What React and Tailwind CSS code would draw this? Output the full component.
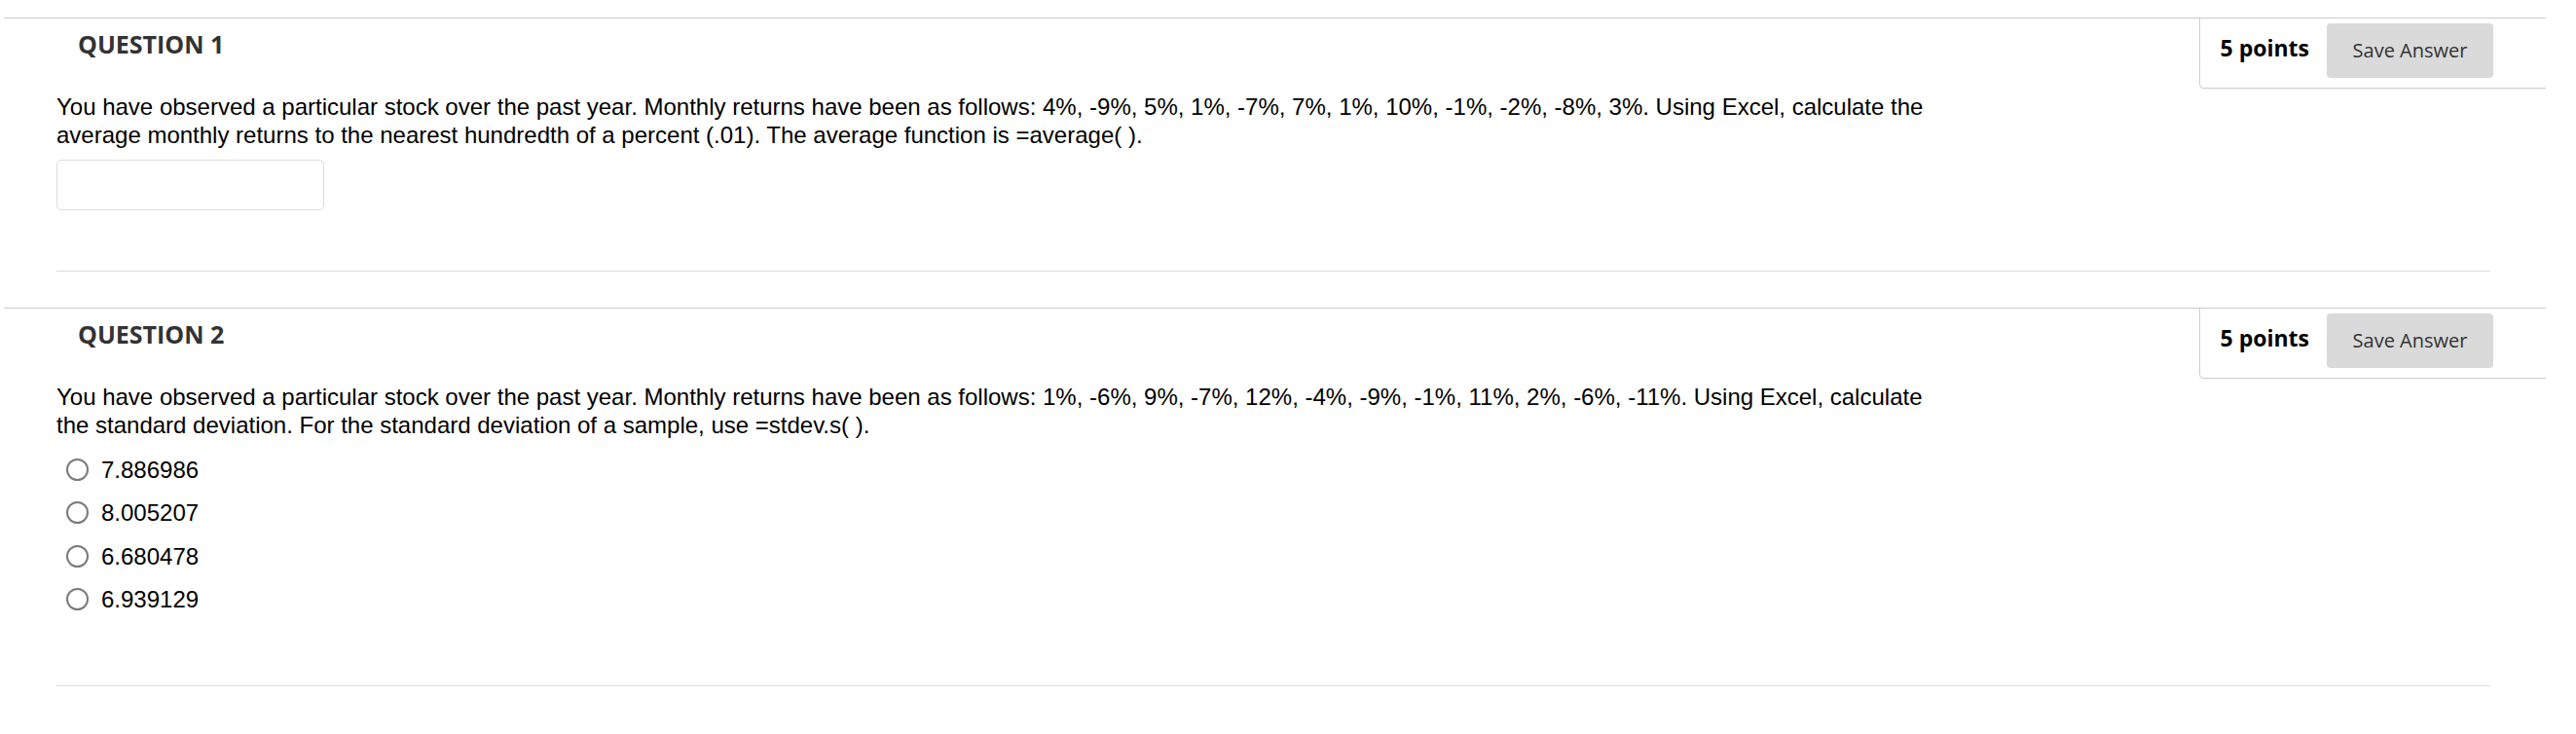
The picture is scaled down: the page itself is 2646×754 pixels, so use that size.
import React from "react";

const questions = [
  {
    id: 1,
    points: 5,
    text: "You have observed a particular stock over the past year. Monthly returns have been as follows: 4%, -9%, 5%, 1%, -7%, 7%, 1%, 10%, -1%, -2%, -8%, 3%. Using Excel, calculate the average monthly returns to the nearest hundredth of a percent (.01). The average function is =average( ).",
    type: "fill",
  },
  {
    id: 2,
    points: 5,
    text: "You have observed a particular stock over the past year. Monthly returns have been as follows: 1%, -6%, 9%, -7%, 12%, -4%, -9%, -1%, 11%, 2%, -6%, -11%. Using Excel, calculate the standard deviation. For the standard deviation of a sample, use =stdev.s( ).",
    type: "choice",
    options: ["7.886986", "8.005207", "6.680478", "6.939129"],
  },
];

function PointsBox({ points }) {
  return (
    <div className="flex items-start bg-white border-l border-b border-[#cfcfcf] rounded-bl-[5px] shadow-[0_1px_2px_rgba(0,0,0,0.06)] pl-[21px] pr-[54px] pt-[5px] pb-[10px] font-['Open_Sans',sans-serif]">
      <span className="mt-[10px] text-[23px] leading-[30px] font-bold text-black">{points} points</span>
      <button
        type="button"
        className="ml-[18px] w-[171px] h-[56px] rounded-[4px] bg-[#dadada] text-[20px] text-[#333] cursor-pointer"
      >
        Save Answer
      </button>
    </div>
  );
}

function Question({ q }) {
  return (
    <div className="border-t border-[#cccccc]">
      <div className="flex justify-between items-start">
        <h3 className="pl-[76px] pt-[8px] text-[25px] leading-[36px] font-bold text-[#333] font-['Open_Sans',sans-serif]">
          QUESTION {q.id}
        </h3>
        <PointsBox points={q.points} />
      </div>

      <div className="pl-[54px] mr-[57px] mt-[4px] font-['Liberation_Sans',Arial,sans-serif] text-black">
        <p className="max-w-[1945px] text-[24px] leading-[29px]">{q.text}</p>

        {q.type === "fill" && (
          <input
            type="text"
            className="block mt-[11px] w-[275px] h-[52px] border border-[#dddddd] rounded-[5px] outline-none"
          />
        )}

        {q.type === "choice" && (
          <div className="mt-[9px] mb-[66px] pl-[10px]">
            {q.options.map((opt) => (
              <label key={opt} className="flex items-center h-[44.5px] gap-[13px] text-[24px] leading-[29px]">
                <input
                  type="radio"
                  name={`q${q.id}`}
                  className="appearance-none w-[23px] h-[23px] rounded-full border-2 border-[#7a7a7a] bg-white"
                />
                {opt}
              </label>
            ))}
          </div>
        )}

        {q.type === "fill" && <div className="h-[62px]" />}
        <div className="border-t border-[#dddddd]" />
      </div>
    </div>
  );
}

export default function App() {
  return (
    <div className="min-h-screen bg-white pt-[18px]">
      <div className="ml-[4px] w-[2611px] flex flex-col gap-[37px]">
        {questions.map((q) => (
          <Question key={q.id} q={q} />
        ))}
      </div>
    </div>
  );
}
